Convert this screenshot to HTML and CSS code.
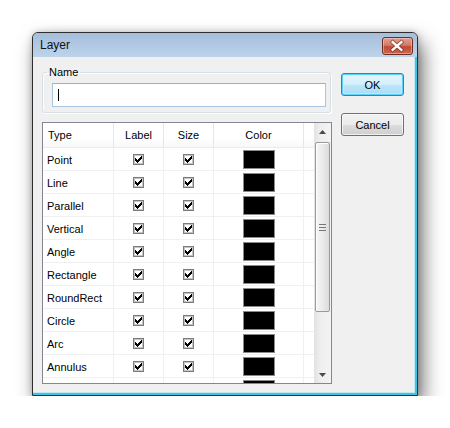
FILE: index.html
```html
<!DOCTYPE html>
<html>
<head>
<meta charset="utf-8">
<title>Layer</title>
<link rel="stylesheet" href="styles.css">
</head>
<body>
<div class="window">
  <div class="titlebar">
    <span class="title">Layer</span>
    <div class="close">
      <svg width="31" height="18" viewBox="0 0 31 18">
        <path d="M11 5 L20 13 M20 5 L11 13" stroke="#5a2a22" stroke-width="4.2" stroke-linecap="square" fill="none" opacity="0.55"/>
        <path d="M11 5 L20 13 M20 5 L11 13" stroke="#ffffff" stroke-width="2.4" stroke-linecap="square" fill="none"/>
      </svg>
    </div>
  </div>
  <div class="client">
    <div class="main">
      <fieldset class="group">
        <legend>Name</legend>
        <div class="textbox"><span class="caret"></span></div>
      </fieldset>
      <div class="list">
        <div class="grid">
          <div class="hrow">
            <div class="hc c-type">Type</div>
            <div class="hc c-label">Label</div>
            <div class="hc c-size">Size</div>
            <div class="hc c-color">Color</div>
            <div class="hc c-rest"></div>
          </div>
          <div class="row"><div class="cell c-type">Point</div><div class="cell c-label"><span class="chk"></span></div><div class="cell c-size"><span class="chk"></span></div><div class="cell c-color"><span class="swatch"></span></div><div class="cell c-rest"></div></div>
          <div class="row"><div class="cell c-type">Line</div><div class="cell c-label"><span class="chk"></span></div><div class="cell c-size"><span class="chk"></span></div><div class="cell c-color"><span class="swatch"></span></div><div class="cell c-rest"></div></div>
          <div class="row"><div class="cell c-type">Parallel</div><div class="cell c-label"><span class="chk"></span></div><div class="cell c-size"><span class="chk"></span></div><div class="cell c-color"><span class="swatch"></span></div><div class="cell c-rest"></div></div>
          <div class="row"><div class="cell c-type">Vertical</div><div class="cell c-label"><span class="chk"></span></div><div class="cell c-size"><span class="chk"></span></div><div class="cell c-color"><span class="swatch"></span></div><div class="cell c-rest"></div></div>
          <div class="row"><div class="cell c-type">Angle</div><div class="cell c-label"><span class="chk"></span></div><div class="cell c-size"><span class="chk"></span></div><div class="cell c-color"><span class="swatch"></span></div><div class="cell c-rest"></div></div>
          <div class="row"><div class="cell c-type">Rectangle</div><div class="cell c-label"><span class="chk"></span></div><div class="cell c-size"><span class="chk"></span></div><div class="cell c-color"><span class="swatch"></span></div><div class="cell c-rest"></div></div>
          <div class="row"><div class="cell c-type">RoundRect</div><div class="cell c-label"><span class="chk"></span></div><div class="cell c-size"><span class="chk"></span></div><div class="cell c-color"><span class="swatch"></span></div><div class="cell c-rest"></div></div>
          <div class="row"><div class="cell c-type">Circle</div><div class="cell c-label"><span class="chk"></span></div><div class="cell c-size"><span class="chk"></span></div><div class="cell c-color"><span class="swatch"></span></div><div class="cell c-rest"></div></div>
          <div class="row"><div class="cell c-type">Arc</div><div class="cell c-label"><span class="chk"></span></div><div class="cell c-size"><span class="chk"></span></div><div class="cell c-color"><span class="swatch"></span></div><div class="cell c-rest"></div></div>
          <div class="row"><div class="cell c-type">Annulus</div><div class="cell c-label"><span class="chk"></span></div><div class="cell c-size"><span class="chk"></span></div><div class="cell c-color"><span class="swatch"></span></div><div class="cell c-rest"></div></div>
          <div class="row"><div class="cell c-type"></div><div class="cell c-label"></div><div class="cell c-size"></div><div class="cell c-color"><span class="swatch"></span></div><div class="cell c-rest"></div></div>
        </div>
        <div class="vscroll">
          <div class="sbtn">
            <svg width="7" height="4" viewBox="0 0 7 4"><path d="M3.5 0 L7 4 L0 4 Z" fill="#4a4a4a"/></svg>
          </div>
          <div class="track">
            <div class="thumb">
              <svg width="7" height="7" viewBox="0 0 7 7">
                <rect x="0" y="0" width="7" height="1" fill="#777"/>
                <rect x="0" y="3" width="7" height="1" fill="#777"/>
                <rect x="0" y="6" width="7" height="1" fill="#777"/>
              </svg>
            </div>
          </div>
          <div class="sbtn">
            <svg width="7" height="4" viewBox="0 0 7 4"><path d="M0 0 L7 0 L3.5 4 Z" fill="#4a4a4a"/></svg>
          </div>
        </div>
      </div>
    </div>
    <div class="buttons">
      <button class="btn btn-default">OK</button>
      <button class="btn">Cancel</button>
    </div>
  </div>
</div>
</body>
</html>
```

FILE: styles.css
```css
html, body {
  margin: 0;
  padding: 0;
  background: #ffffff;
}

body {
  padding: 32px 0 0 32px;
  font-family: "Liberation Sans", Arial, sans-serif;
  font-size: 11px;
  color: #000;
}

.window {
  width: 384px;
  height: 362px;
  border: 1px solid #2e2e2e;
  border-radius: 6px 6px 0 0;
  background: #f0f0f0;
  box-shadow: 5px 10px 20px rgba(0, 0, 0, 0.55), 0 0 7px rgba(0, 0, 0, 0.2);
  display: flex;
  flex-direction: column;
  overflow: hidden;
}

.titlebar {
  height: 24px;
  flex: none;
  display: flex;
  justify-content: space-between;
  align-items: flex-start;
  background: linear-gradient(#a5bedb, #bdd3eb);
  border-radius: 5px 5px 0 0;
}

.title {
  padding-left: 7px;
  line-height: 24px;
  font-size: 12px;
  color: #111;
}

.close {
  width: 31px;
  height: 18px;
  margin: 4px 4px 0 0;
  box-sizing: border-box;
  border: 1px solid #6f2d22;
  border-radius: 3px;
  background: linear-gradient(#e2a08f 0%, #d37a65 45%, #c04a33 55%, #cc6850 100%);
  box-shadow: inset 0 0 0 1px rgba(255, 220, 210, 0.45);
  display: flex;
}

.close svg {
  margin: -1px 0 0 -1px;
}

.client {
  flex: 1;
  display: flex;
  align-items: flex-start;
  padding: 8px 0 0 9px;
  box-shadow: inset -2px -2px 0 #3fc4e4, inset -3px -3px 0 #bfe9f5;
}

.main {
  width: 290px;
  flex: none;
}

.group {
  margin: 0;
  width: 289px;
  box-sizing: border-box;
  padding: 4px 4px 5px 4px;
  border: 1px solid #d5dfe5;
  border-radius: 3px;
  min-width: 0;
  box-shadow: inset 1px 1px 0 #ffffff, 1px 1px 0 #ffffff;
}

.group legend {
  padding: 0 2px;
  margin: 0;
  line-height: 14px;
  font-size: 11px;
}

.textbox {
  margin-left: 5px;
  width: 274px;
  height: 24px;
  box-sizing: border-box;
  border: 1px solid #a8c6e2;
  border-top-color: #8fb3d8;
  background: #fff;
  display: flex;
  align-items: center;
  padding-left: 5px;
}

.caret {
  width: 1px;
  height: 12px;
  background: #000;
  margin-top: -1px;
}

.list {
  margin-top: 9px;
  width: 290px;
  height: 262px;
  box-sizing: border-box;
  border: 1px solid #828790;
  background: #fff;
  display: flex;
  overflow: hidden;
}

.grid {
  flex: 1;
  min-width: 0;
  overflow: hidden;
}

.hrow, .row {
  display: flex;
}

.hrow {
  height: 25px;
  box-sizing: border-box;
  border-bottom: 1px solid #ececec;
  background: linear-gradient(#ffffff 0%, #ffffff 60%, #f7f8f9 100%);
}

.hc {
  box-sizing: border-box;
  border-right: 1px solid #e4e6e8;
  line-height: 24px;
  text-align: center;
}

.row {
  height: 23px;
  box-sizing: border-box;
  border-bottom: 1px solid #f0f0f0;
}

.cell {
  box-sizing: border-box;
  border-right: 1px solid #f0f0f0;
  display: flex;
  align-items: center;
  justify-content: center;
}

.c-type { width: 71px; flex: none; }
.c-label { width: 50px; flex: none; }
.c-size { width: 50px; flex: none; }
.c-color { width: 90px; flex: none; }
.c-rest { flex: 1; border-right: 0; }

.hc.c-type {
  text-align: left;
  padding-left: 5px;
}

.cell.c-type {
  justify-content: flex-start;
  padding-left: 4px;
  padding-top: 1px;
}

.chk {
  width: 11px;
  height: 11px;
  box-sizing: border-box;
  border: 1px solid #7b7b7b;
  box-shadow: inset 0 0 0 1px #c4c4c4;
  background-color: #fff;
  background-image: url("data:image/svg+xml,%3Csvg xmlns='http://www.w3.org/2000/svg' width='7' height='7' shape-rendering='crispEdges'%3E%3Cg fill='%23000'%3E%3Crect x='6' y='0' width='1' height='1'/%3E%3Crect x='5' y='1' width='2' height='1'/%3E%3Crect x='0' y='2' width='1' height='1'/%3E%3Crect x='4' y='2' width='3' height='1'/%3E%3Crect x='0' y='3' width='2' height='1'/%3E%3Crect x='3' y='3' width='3' height='1'/%3E%3Crect x='0' y='4' width='5' height='1'/%3E%3Crect x='1' y='5' width='3' height='1'/%3E%3Crect x='2' y='6' width='1' height='1'/%3E%3C/g%3E%3C/svg%3E");
  background-repeat: no-repeat;
  background-position: 1px 1px;
  margin-top: 1px;
}

.swatch {
  width: 32px;
  height: 19px;
  box-sizing: border-box;
  border: 1px solid #8a8a8a;
  background: #000;
  margin-top: 1px;
}

.vscroll {
  width: 17px;
  flex: none;
  display: flex;
  flex-direction: column;
  background: linear-gradient(to right, #e2e2e2 0%, #eeeeee 35%, #f3f3f3 100%);
}

.sbtn {
  height: 17px;
  flex: none;
  display: flex;
  align-items: center;
  justify-content: center;
}

.track {
  flex: 1;
  padding: 2px 1px 0 1px;
}

.thumb {
  height: 170px;
  box-sizing: border-box;
  border: 1px solid #9a9a9a;
  border-radius: 2px;
  background: linear-gradient(to right, #f5f5f5 0%, #ececec 45%, #dcdcdc 100%);
  box-shadow: inset 1px 1px 0 #ffffff;
  display: flex;
  align-items: center;
  justify-content: center;
}

.buttons {
  margin: 8px 0 0 9px;
  display: flex;
  flex-direction: column;
  gap: 17px;
}

.btn {
  width: 63px;
  height: 23px;
  box-sizing: border-box;
  border: 1px solid #707070;
  border-radius: 3px;
  font-family: "Liberation Sans", Arial, sans-serif;
  font-size: 11px;
  color: #000;
  padding: 0;
  background: linear-gradient(#f2f2f2 0%, #ebebeb 50%, #dddddd 50%, #cfcfcf 100%);
  box-shadow: inset 0 0 0 1px rgba(255, 255, 255, 0.7);
}

.btn-default {
  border-color: #3c7fb1;
  background: linear-gradient(#e6f6fd 0%, #d4effc 50%, #bde6fb 50%, #a9dcf6 100%);
  box-shadow: inset 0 0 0 1px #5cd0f6, inset 0 0 0 2px rgba(200, 240, 255, 0.6);
}
```
